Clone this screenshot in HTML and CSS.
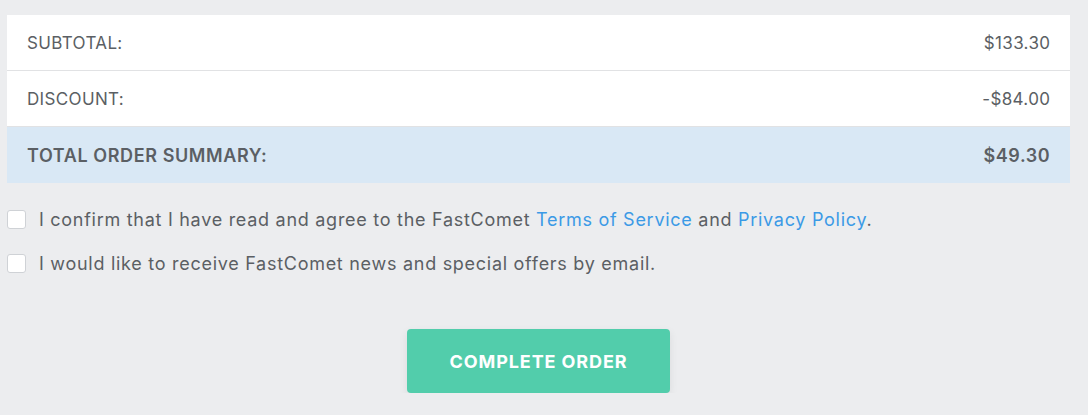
FILE: index.html
```html
<!DOCTYPE html>
<html>
<head>
<meta charset="utf-8">
<link rel="stylesheet" href="styles.css">
</head>
<body>
<div class="wrap">
  <div class="summary">
    <div class="row"><span>SUBTOTAL:</span><span>$133.30</span></div>
    <div class="row"><span>DISCOUNT:</span><span>-$84.00</span></div>
    <div class="row total"><span>TOTAL ORDER SUMMARY:</span><span>$49.30</span></div>
  </div>
  <div class="checks">
    <label class="check"><span class="box"></span><span>I confirm that I have read and agree to the FastComet <a href="#">Terms of Service</a> and <a href="#">Privacy Policy</a>.</span></label>
    <label class="check"><span class="box"></span><span>I would like to receive FastComet news and special offers by email.</span></label>
  </div>
  <div class="actions">
    <button class="btn">COMPLETE ORDER</button>
  </div>
</div>
</body>
</html>
```
FILE: styles.css
```css
html, body {
  margin: 0;
  padding: 0;
  background: #ecedef;
  font-family: Inter, "Open Sans", sans-serif;
  color: #5b5f64;
}
.wrap {
  width: 1063px;
  margin-left: 7px;
  padding-top: 15px;
}
.summary {
  background: #fff;
}
.row {
  display: flex;
  justify-content: space-between;
  align-items: center;
  height: 55px;
  padding: 0 20px;
  font-size: 17px;
  letter-spacing: 0.35px;
  border-bottom: 1px solid #e1e2e4;
}
.row span:last-child {
  margin-right: -0.35px;
}
.row.total {
  background: #d9e8f5;
  border-bottom: none;
  height: 56px;
  font-weight: 600;
  font-size: 18px;
  letter-spacing: 0.6px;
}
.checks {
  padding-top: 26px;
  display: flex;
  flex-direction: column;
  gap: 23px;
}
.check {
  display: flex;
  align-items: center;
  gap: 13px;
  font-size: 18px;
  line-height: 21px;
  letter-spacing: 0.72px;
}
.box {
  width: 17px;
  height: 17px;
  border: 1px solid #cfd2d6;
  border-radius: 3px;
  background: #fff;
  flex: none;
}
.check a {
  color: #3b9ae6;
  text-decoration: none;
}
.actions {
  display: flex;
  justify-content: center;
  padding-top: 55px;
}
.btn {
  width: 263px;
  height: 64px;
  border: none;
  border-radius: 4px;
  background: #52cdab;
  color: #fff;
  font-family: inherit;
  font-weight: 700;
  font-size: 18px;
  letter-spacing: 0.9px;
  box-shadow: 0 3px 8px rgba(0,0,0,0.08);
}
```
